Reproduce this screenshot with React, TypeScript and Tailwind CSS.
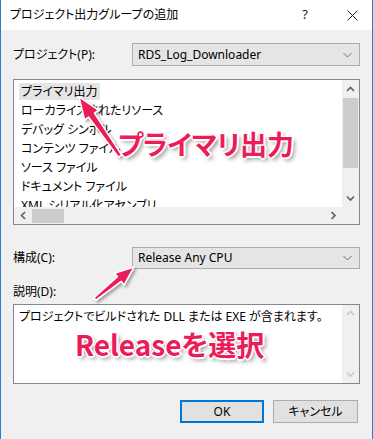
import React from "react";

const items = [
  "プライマリ出力",
  "ローカライズされたリソース",
  "デバッグ シンボル",
  "コンテンツ ファイル",
  "ソース ファイル",
  "ドキュメント ファイル",
  "XML シリアル化アセンブリ",
];

const ui = "font-['Noto_Sans','Noto_Sans_CJK_JP',sans-serif] [font-feature-settings:'palt']";

// arrow polygon from tail (x1,y1) to tip (x2,y2)
function arrowPoints(x1: number, y1: number, x2: number, y2: number, head: number, headW: number, w0: number, w1: number) {
  const dx = x2 - x1;
  const dy = y2 - y1;
  const len = Math.hypot(dx, dy);
  const ux = dx / len;
  const uy = dy / len;
  const nx = -uy;
  const ny = ux;
  const bx = x1 + ux * (len - head);
  const by = y1 + uy * (len - head);
  const pts = [
    [x1 + (nx * w0) / 2, y1 + (ny * w0) / 2],
    [bx + (nx * w1) / 2, by + (ny * w1) / 2],
    [bx + (nx * headW) / 2, by + (ny * headW) / 2],
    [x2, y2],
    [bx - (nx * headW) / 2, by - (ny * headW) / 2],
    [bx - (nx * w1) / 2, by - (ny * w1) / 2],
    [x1 - (nx * w0) / 2, y1 - (ny * w0) / 2],
  ];
  return pts.map((p) => p.map((v) => v.toFixed(1)).join(",")).join(" ");
}

function Chevron({ dir, color = "#606060" }: { dir: "up" | "down" | "left" | "right"; color?: string }) {
  const d = {
    up: "M1 5 L4.5 1.5 L8 5",
    down: "M1 1.5 L4.5 5 L8 1.5",
    left: "M5 1 L1.5 4.5 L5 8",
    right: "M1.5 1 L5 4.5 L1.5 8",
  }[dir];
  const vertical = dir === "up" || dir === "down";
  return (
    <svg width={vertical ? 9 : 7} height={vertical ? 7 : 9} viewBox={vertical ? "0 0 9 7" : "0 0 7 9"}>
      <path d={d} fill="none" stroke={color} strokeWidth="1.6" />
    </svg>
  );
}

function ComboArrow() {
  return (
    <svg width="9" height="6" viewBox="0 0 9 6">
      <path d="M0.5 1 L4.5 5 L8.5 1" fill="none" stroke="#707070" strokeWidth="1" />
    </svg>
  );
}

function Combo({ value, h }: { value: string; h: string }) {
  return (
    <div className={`w-[228px] ${h} flex items-center justify-between bg-[#e5e5e5] border border-[#adadad] pl-[5px] pr-[7px]`}>
      <span className="text-[12px] text-black">{value}</span>
      <ComboArrow />
    </div>
  );
}

export default function App() {
  const shadow =
    "[text-shadow:1px_1px_0_#fff,-1px_-1px_0_#fff,1px_-1px_0_#fff,-1px_1px_0_#fff,0_2px_0_#fff,2px_0_0_#fff,3px_3px_4px_rgba(0,0,0,0.45)]";

  return (
    <div className={`relative w-[373px] h-[439px] overflow-hidden bg-[#f0f0f0] border-x border-[#2b7cd3] ${ui} text-black`}>
      {/* title bar */}
      <div className="h-[30px] bg-white flex items-center pl-[9px] pr-[14px]">
        <span className="text-[12px] flex-1">プロジェクト出力グループの追加</span>
        <span className="text-[13px] mr-[39px] text-[#222]">?</span>
        <svg width="11" height="11" viewBox="0 0 11 11">
          <path d="M0.5 0.5 L10.5 10.5 M10.5 0.5 L0.5 10.5" stroke="#222" strokeWidth="1" />
        </svg>
      </div>

      <div className="px-[12px] flex flex-col">
        {/* project */}
        <div className="mt-[13px] flex items-center h-[23px]">
          <span className="w-[119px] text-[12px]">プロジェクト(P):</span>
          <Combo value="RDS_Log_Downloader" h="h-[23px]" />
        </div>

        {/* list */}
        <div className="mt-[13px] h-[146px] border border-[#828790] bg-white flex flex-col">
          <div className="flex h-[127px]">
            <div className="flex-1 overflow-hidden pt-[2px] pl-[5px]">
              {items.map((it, i) => (
                <div key={it} className="h-[19px] flex items-center">
                  <span className={`h-[17px] px-[2px] flex items-center text-[12px] ${i === 0 ? "bg-[#e5e5e5]" : ""}`}>{it}</span>
                </div>
              ))}
            </div>
            <div className="w-[17px] bg-[#f0f0f0] flex flex-col">
              <div className="h-[18px] flex items-center justify-center"><Chevron dir="up" /></div>
              <div className="h-[70px] bg-[#cdcdcd] mx-[1px]" />
              <div className="flex-1" />
              <div className="h-[17px] flex items-center justify-center"><Chevron dir="down" /></div>
            </div>
          </div>
          <div className="flex h-[17px]">
            <div className="flex-1 bg-[#f0f0f0] flex items-center">
              <div className="w-[18px] flex justify-center"><Chevron dir="left" /></div>
              <div className="w-[32px] h-[14px] bg-[#cdcdcd]" />
              <div className="flex-1" />
              <div className="w-[17px] flex justify-center"><Chevron dir="right" /></div>
            </div>
            <div className="w-[17px] bg-[#f0f0f0]" />
          </div>
        </div>

        {/* config */}
        <div className="mt-[22px] flex items-center h-[22px]">
          <span className="w-[119px] text-[12px]">構成(C):</span>
          <Combo value="Release Any CPU" h="h-[22px]" />
        </div>

        <div className="mt-[15px] h-[16px] flex items-center text-[12px]">説明(D):</div>

        <div className="mt-[4px] h-[80px] border border-[#828790] bg-white flex">
          <div className="flex-1 pl-[5px] pt-[3px] text-[12px]">プロジェクトでビルドされた DLL または EXE が含まれます。</div>
          <div className="w-[17px] bg-[#f0f0f0] flex flex-col justify-between">
            <div className="h-[17px] flex items-center justify-center"><Chevron dir="up" color="#c8c8c8" /></div>
            <div className="h-[17px] flex items-center justify-center"><Chevron dir="down" color="#c8c8c8" /></div>
          </div>
        </div>

        {/* buttons */}
        <div className="mt-[16px] flex justify-end gap-[9px] pr-[2px]">
          <button className="w-[84px] h-[23px] bg-[#e1e1e1] border-2 border-[#0078d7] text-[12px]">OK</button>
          <button className="w-[85px] h-[23px] bg-[#e1e1e1] border border-[#adadad] text-[12px]">キャンセル</button>
        </div>
      </div>

      {/* annotations */}
      <svg className="absolute inset-0 pointer-events-none" width="373" height="439">
        <defs>
          <filter id="sh" x="-20%" y="-20%" width="140%" height="140%">
            <feDropShadow dx="2" dy="2" stdDeviation="1.5" floodColor="#000" floodOpacity="0.35" />
          </filter>
        </defs>
        <polygon
          points={arrowPoints(119, 156, 78, 97, 22, 17, 4, 7)}
          fill="#ec1b5a"
          stroke="#fff"
          strokeWidth="1.5"
          strokeLinejoin="round"
          filter="url(#sh)"
        />
        <polygon
          points={arrowPoints(94, 299, 133, 267, 19, 15, 3, 6)}
          fill="#ec1b5a"
          stroke="#fff"
          strokeWidth="1.5"
          strokeLinejoin="round"
          filter="url(#sh)"
        />
      </svg>
      <span className={`absolute left-[117px] top-[130px] text-[27px] leading-none font-bold text-[#ec1b5a] font-['Noto_Sans_CJK_JP',sans-serif] ${shadow}`}>
        プライマリ出力
      </span>
      <span className={`absolute left-[74px] top-[330px] text-[28px] leading-none font-bold text-[#ec1b5a] font-['Noto_Sans_CJK_JP',sans-serif] ${shadow}`}>
        Releaseを選択
      </span>
    </div>
  );
}
